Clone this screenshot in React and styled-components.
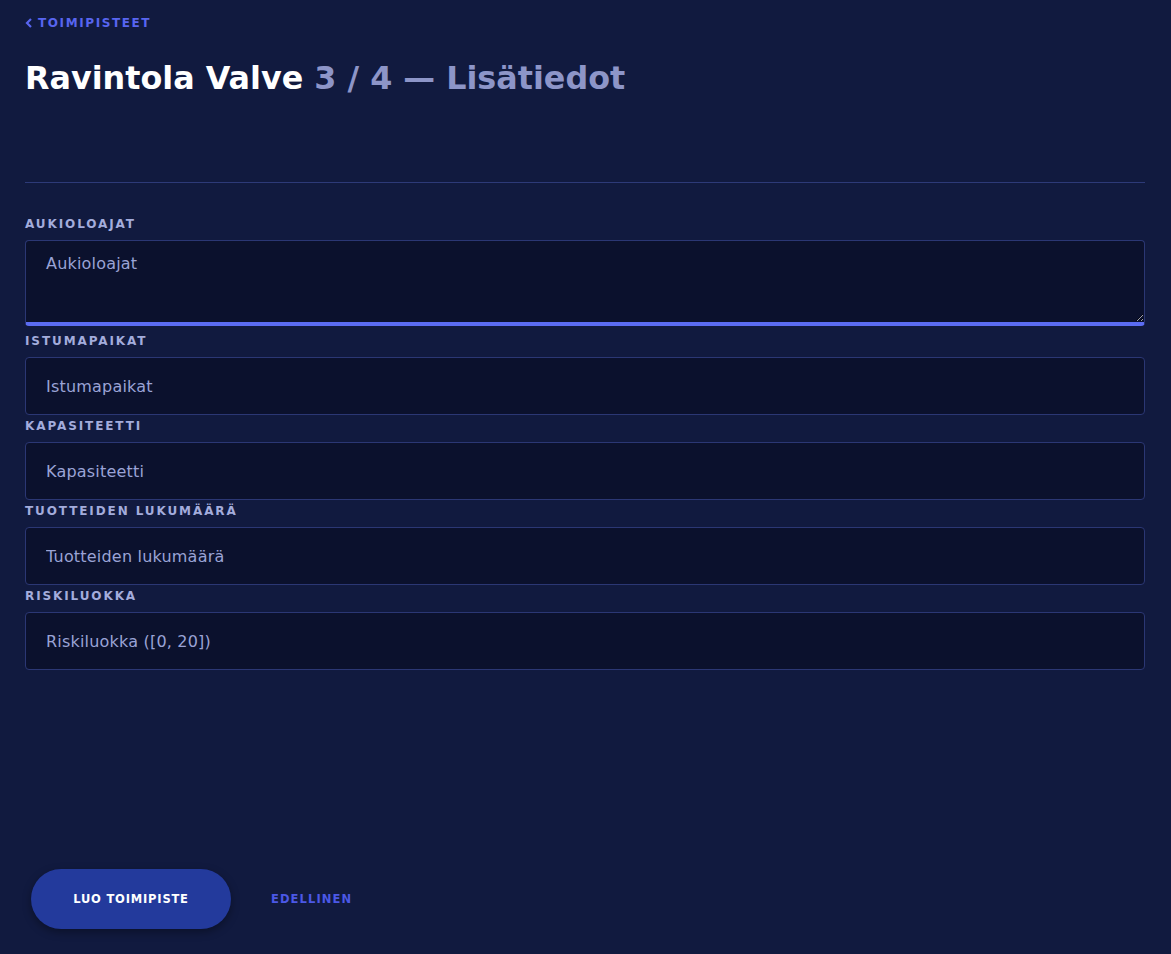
import React from "react";
import styled, { createGlobalStyle } from "styled-components";

const Global = createGlobalStyle`
  html, body { margin: 0; padding: 0; background: #111a3f; }
  body { font-family: "DejaVu Sans", "Open Sans", sans-serif; }
  * { box-sizing: border-box; }
`;

const Page = styled.div`
  min-height: 954px;
  padding: 16px 26px 25px 25px;
  display: flex;
  flex-direction: column;
`;

const BackLink = styled.a`
  display: flex;
  align-items: center;
  gap: 5px;
  color: #5865f0;
  font-size: 12px;
  font-weight: 700;
  letter-spacing: 1.6px;
  text-transform: uppercase;
  text-decoration: none;
  line-height: 14px;
`;

const Title = styled.h1`
  margin: 28px 0 0;
  font-size: 31.8px;
  font-weight: 600;
  line-height: 40px;
  color: #ffffff;
`;

const Muted = styled.span`
  color: #8d95c8;
`;

const Divider = styled.hr`
  margin: 84px 0 0;
  border: 0;
  border-top: 1px solid #2d3a78;
`;

const Form = styled.form`
  margin-top: 33px;
  display: flex;
  flex-direction: column;
`;

const Label = styled.label`
  display: block;
  color: #a3acdc;
  font-size: 12px;
  font-weight: 700;
  letter-spacing: 1.9px;
  text-transform: uppercase;
  line-height: 16px;
  margin: 0 0 8px;
`;

const fieldBase = `
  width: 100%;
  background: #0b112d;
  border: 1px solid #2b3774;
  border-radius: 4px;
  color: #a3acdc;
  font-family: "DejaVu Sans", "Open Sans", sans-serif;
  font-size: 16px;
  letter-spacing: 0.2px;
  padding: 0 20px;
  outline: none;
  &::placeholder { color: #9aa3d6; opacity: 1; }
`;

const TextArea = styled.textarea`
  ${fieldBase}
  display: block;
  height: 86px;
  padding-top: 13px;
  border-bottom: 4px solid #5b6cf2;
  resize: vertical;
  margin-bottom: 7px;
`;

const Input = styled.input`
  ${fieldBase}
  display: block;
  height: 58px;
  margin-bottom: 3px;
`;

const Actions = styled.div`
  margin-top: auto;
  display: flex;
  align-items: center;
  gap: 40px;
  padding-left: 6px;
`;

const PrimaryButton = styled.button`
  width: 200px;
  height: 60px;
  border: 0;
  border-radius: 30px;
  background: #233a9c;
  color: #ffffff;
  font-family: inherit;
  font-size: 11.5px;
  font-weight: 700;
  letter-spacing: 0.8px;
  box-shadow: 0 3px 8px rgba(0, 0, 0, 0.35);
  cursor: pointer;
`;

const TextButton = styled.button`
  border: 0;
  background: none;
  padding: 0;
  color: #4b58e6;
  font-family: inherit;
  font-size: 11.5px;
  font-weight: 700;
  letter-spacing: 1.1px;
  cursor: pointer;
`;

const fields = [
  { label: "Istumapaikat", ph: "Istumapaikat" },
  { label: "Kapasiteetti", ph: "Kapasiteetti" },
  { label: "Tuotteiden lukumäärä", ph: "Tuotteiden lukumäärä" },
  { label: "Riskiluokka", ph: "Riskiluokka ([0, 20])" },
];

export default function App() {
  return (
    <>
      <Global />
      <Page>
        <BackLink href="#">
          <svg width="8" height="10" viewBox="0 0 8 10">
            <path d="M6 1 L2 5 L6 9" fill="none" stroke="#5865f0" strokeWidth="2.2" />
          </svg>
          Toimipisteet
        </BackLink>
        <Title>
          Ravintola Valve <Muted>3 / 4 — Lisätiedot</Muted>
        </Title>
        <Divider />
        <Form onSubmit={(e) => e.preventDefault()}>
          <Label>Aukioloajat</Label>
          <TextArea placeholder="Aukioloajat" />
          {fields.map((f) => (
            <React.Fragment key={f.label}>
              <Label>{f.label}</Label>
              <Input placeholder={f.ph} />
            </React.Fragment>
          ))}
        </Form>
        <Actions>
          <PrimaryButton>LUO TOIMIPISTE</PrimaryButton>
          <TextButton>EDELLINEN</TextButton>
        </Actions>
      </Page>
    </>
  );
}
